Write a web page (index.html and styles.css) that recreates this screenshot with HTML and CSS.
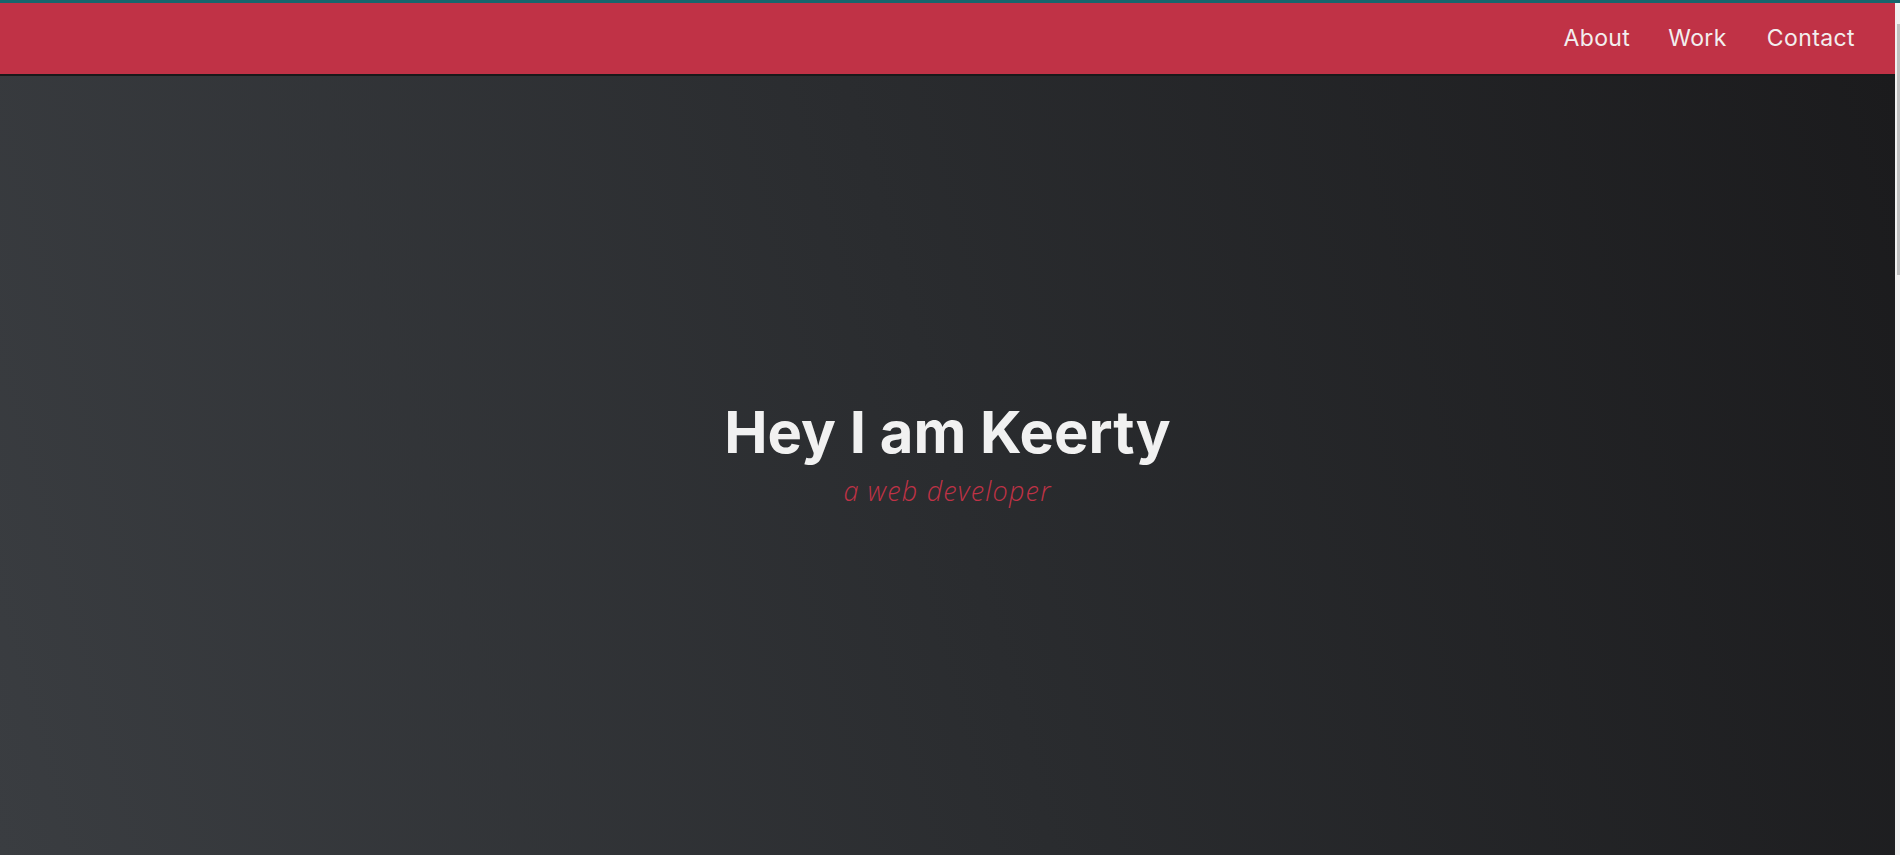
FILE: index.html
```html
<!DOCTYPE html>
<html lang="en">
<head>
<meta charset="utf-8">
<title>Keerty</title>
<link rel="stylesheet" href="styles.css">
</head>
<body>
<div class="frame">
  <div class="page">
    <header class="navbar">
      <nav class="nav-links">
        <a class="nav-link" href="#about">About</a>
        <a class="nav-link" href="#work">Work</a>
        <a class="nav-link" href="#contact">Contact</a>
      </nav>
    </header>
    <section class="hero">
      <h1 class="hero-title">Hey I am Keerty</h1>
      <p class="hero-subtitle">a web developer</p>
    </section>
  </div>
  <div class="scrollbar"><div class="scrollbar-thumb"></div></div>
</div>
</body>
</html>
```
FILE: styles.css
```css
html, body {
  margin: 0;
  padding: 0;
  height: 100%;
  overflow: hidden;
}
body {
  border-top: 3px solid #17666d;
  box-sizing: border-box;
  background: #1b1b1d;
  font-family: "Inter", "Liberation Sans", sans-serif;
}
.frame {
  display: flex;
  height: 100%;
}
.page {
  flex: 1;
  display: flex;
  flex-direction: column;
}
.navbar {
  height: 71px;
  background: #c03246;
  border-bottom: 2px solid #19191a;
  display: flex;
  justify-content: flex-end;
  align-items: center;
}
.nav-links {
  display: flex;
  padding-right: 20px;
}
.nav-link {
  color: #f2eeee;
  text-decoration: none;
  font-size: 23px;
  letter-spacing: 0.4px;
  font-weight: 400;
  padding: 0 20px;
  margin-top: -1px;
}
.nav-link:first-child {
  padding-right: 18px;
}
.hero {
  flex: 1;
  display: flex;
  flex-direction: column;
  align-items: center;
  justify-content: center;
  background: linear-gradient(75deg, #3a3d41 0%, #2a2c2f 50%, #1b1b1d 100%);
  padding-bottom: 24px;
}
.hero-title {
  margin: 0;
  color: #f1f1f1;
  font-size: 58px;
  font-weight: 700;
  letter-spacing: 0px;
  line-height: 1.1;
}
.hero-subtitle {
  margin: 11px 0 0;
  color: #c03246;
  font-family: "Open Sans", "Liberation Sans", sans-serif;
  font-style: italic;
  font-weight: 300;
  font-size: 27px;
  letter-spacing: 1.2px;
  line-height: 1.1;
}
.scrollbar {
  width: 5px;
  background: #f1f1f1;
  display: flex;
  flex-direction: column;
  align-items: flex-end;
}
.scrollbar-thumb {
  width: 3px;
  height: 251px;
  margin-top: 21px;
  background: #c1c1c1;
}
```
